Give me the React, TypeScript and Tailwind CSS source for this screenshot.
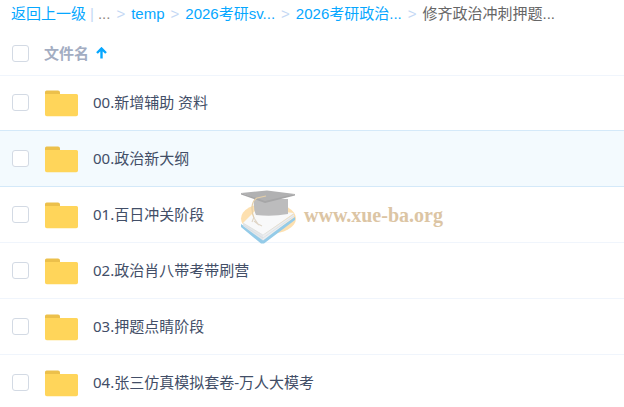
import React, { Fragment } from 'react';

interface Folder {
  id: number;
  name: string;
  active?: boolean;
}

const crumbs = ['temp', '2026考研sv...', '2026考研政治...'];

const folders: Folder[] = [
  { id: 1, name: '00.新增辅助 资料' },
  { id: 2, name: '00.政治新大纲', active: true },
  { id: 3, name: '01.百日冲关阶段' },
  { id: 4, name: '02.政治肖八带考带刷营' },
  { id: 5, name: '03.押题点睛阶段' },
  { id: 6, name: '04.张三仿真模拟套卷-万人大模考' },
];

const Checkbox: React.FC<{ label: string }> = ({ label }) => (
  <input
    type="checkbox"
    aria-label={label}
    className="size-[17px] shrink-0 appearance-none rounded-[3px] border border-[#d3dae4] bg-white checked:bg-[#06a7ff]"
  />
);

const FolderIcon = () => (
  <svg width="33" height="29" viewBox="0 -2 33 29" className="shrink-0" aria-hidden="true">
    <path d="M0 2a1.6 1.6 0 0 1 1.6-1.6H13A2 2 0 0 1 15 2.4V8H0z" fill="#ecc04b" />
    <path d="M0 4H31.5A1.5 1.5 0 0 1 33 5.5V24.5A1.8 1.8 0 0 1 31.2 26.300H1.8A1.8 1.8 0 0 1 0 24.5z" fill="#ffd55a" />
  </svg>
);

const SortArrow = () => (
  <svg width="11" height="12" viewBox="0 0 11 12" fill="none" stroke="#06a7ff" strokeWidth="2.4" aria-hidden="true">
    <path d="M5.5 11.5V1.6M1 6L5.5 1.5L10 6" />
  </svg>
);

const Breadcrumb = () => (
  <nav className="flex h-7 items-center gap-1.5 whitespace-nowrap px-[11px] font-['Liberation_Sans','Noto_Sans_CJK_SC',sans-serif] text-[15px] leading-7 text-[#06a7ff]">
    <div className="flex items-center gap-1">
      <a href="#back">返回上一级</a>
      <span className="text-[#c4d8f4]">|</span>
      <span className="text-[#8f8580]">...</span>
    </div>
    {crumbs.map((crumb) => (
      <Fragment key={crumb}>
        <span className="text-[#c4d8f4]">&gt;</span>
        <a href="#folder">{crumb}</a>
      </Fragment>
    ))}
    <span className="text-[#c4d8f4]">&gt;</span>
    <span className="text-[#666]">修齐政治冲刺押题...</span>
  </nav>
);

// the active row draws its top line over the border of the row before it
const FolderRow: React.FC<{ folder: Folder }> = ({ folder }) => (
  <li
    className={`flex items-center border-b pl-3 ${
      folder.active ? '-mt-px h-[57px] border-t border-[#d4e9f9] bg-[#f3fafe]' : 'h-14 border-[#f0f5fc]'
    }`}
  >
    <Checkbox label={folder.name} />
    <a href="#folder" className="flex items-center gap-[15px] pl-4 text-[#424e67]">
      <FolderIcon />
      <span className="pb-0.5">{folder.name}</span>
    </a>
  </li>
);

const Watermark = () => (
  <div className="pointer-events-none absolute left-[240px] top-[189px] flex items-center gap-2">
    <svg width="56" height="55" viewBox="0 0 56 55" aria-hidden="true">
      <ellipse cx="28.5" cy="29.5" rx="27.5" ry="15.5" fill="#fde0b0" />
      <path d="M1 35L23 50L55 28V31L24 54.5H21L1 38z" fill="#94cbe8" />
      <path d="M3 34L23 46V51.5L3 37z" fill="#e4e7ea" />
      <path d="M23 46L54 25V28L23 51.5z" fill="#eceef0" />
      <path d="M3 34L17 20L54 24L23 46z" fill="#f8f9fa" />
      <path d="M3 34L23 46L54 25M3 36L23 49L54 27" fill="none" stroke="#d3dade" strokeWidth=".6" />
      <path d="M14 10H48V25Q32 28 16 26Q13 20 14 10z" fill="#bcbcbd" />
      <path d="M1 4L27 1.5L55 5L46 8L25 13L14 9z" fill="#b1b1b2" />
      <path d="M1 4L25 12L55 5V6.5L25 14L1 5.5z" fill="#a6a6a7" />
      <path d="M26 7L17 9Q12 12 12 19Q12 25 14 29" fill="none" stroke="#e5cfa8" strokeWidth="1.2" />
      <path d="M14 28L12 33M14 29L18 35M14 32L19 36M18 35L22 37" fill="none" stroke="#dfd5c6" strokeWidth="1.1" />
    </svg>
    <span className="pb-1 font-['Liberation_Serif',serif] text-[20px] font-bold leading-6 text-[#dcc5a4]">
      www.xue-ba.org
    </span>
  </div>
);

const App: React.FC = () => {
  return (
    <main className="relative min-h-screen overflow-hidden bg-white font-['Noto_Sans','Noto_Sans_CJK_SC',sans-serif] text-[15px] leading-6">
      <Breadcrumb />
      <div className="flex h-12 items-center border-b border-[#f0f5fc] pl-3 pt-1">
        <Checkbox label="全选" />
        <button type="button" className="flex items-center gap-[7px] pb-0.5 pl-[15px] font-bold text-[#a3adc2]">
          文件名
          <SortArrow />
        </button>
      </div>
      <ul className="-mt-px">
        {folders.map((folder) => (
          <FolderRow key={folder.id} folder={folder} />
        ))}
      </ul>
      <Watermark />
    </main>
  );
};

export default App;
